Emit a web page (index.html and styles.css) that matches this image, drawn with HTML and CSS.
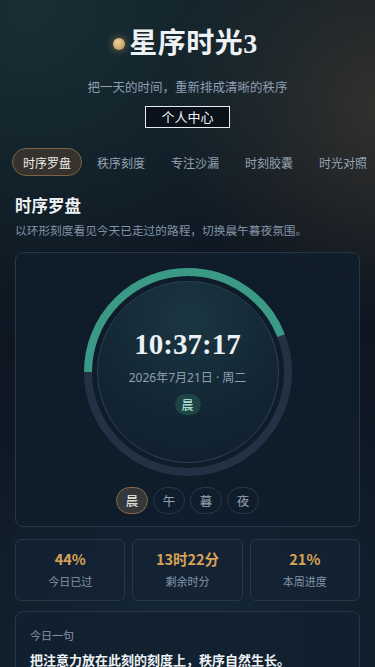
FILE: index.html
```html
<!DOCTYPE html>
<html lang="zh">
<head>
<meta charset="utf-8">
<meta name="viewport" content="width=device-width, initial-scale=1">
<title>星序时光3</title>
<link rel="stylesheet" href="styles.css">
</head>
<body>
<div class="page">
  <header class="hero">
    <h1 class="brand"><span class="brand-dot"></span>星序时光3</h1>
    <p class="tagline">把一天的时间，重新排成清晰的秩序</p>
    <button class="profile-btn">个人中心</button>
  </header>

  <nav class="tabs">
    <span class="tab active">时序罗盘</span>
    <span class="tab">秩序刻度</span>
    <span class="tab">专注沙漏</span>
    <span class="tab">时刻胶囊</span>
    <span class="tab">时光对照</span>
  </nav>

  <section class="section">
    <h2 class="section-title">时序罗盘</h2>
    <p class="section-desc">以环形刻度看见今天已走过的路程，切换晨午暮夜氛围。</p>

    <div class="dial-card">
      <div class="dial">
        <svg class="ring" viewBox="0 0 210 210" width="210" height="210">
          <circle cx="105" cy="105" r="100" fill="none" stroke="#223244" stroke-width="8"/>
          <circle cx="105" cy="105" r="100" fill="none" stroke="#3a9a86" stroke-width="8"
            stroke-dasharray="276.5 628.3" transform="rotate(180 105 105)"/>
        </svg>
        <div class="face">
          <div class="time">10:37:17</div>
          <div class="date">2026年7月21日 · 周二</div>
          <span class="period-badge">晨</span>
        </div>
      </div>
      <div class="periods">
        <span class="period active">晨</span>
        <span class="period">午</span>
        <span class="period">暮</span>
        <span class="period">夜</span>
      </div>
    </div>

    <div class="stats">
      <div class="stat"><div class="stat-value">44%</div><div class="stat-label">今日已过</div></div>
      <div class="stat"><div class="stat-value">13时22分</div><div class="stat-label">剩余时分</div></div>
      <div class="stat"><div class="stat-value">21%</div><div class="stat-label">本周进度</div></div>
    </div>

    <div class="quote-card">
      <div class="quote-label">今日一句</div>
      <div class="quote-text">把注意力放在此刻的刻度上，秩序自然生长。</div>
    </div>
  </section>
</div>
</body>
</html>
```

FILE: styles.css
```css
* { box-sizing: border-box; }
html, body {
  margin: 0;
  height: 100%;
}
body {
  background-color: #0d1520;
  background-image:
    radial-gradient(circle at 8% 2%, rgba(30, 62, 66, 0.55) 0, rgba(30, 62, 66, 0) 45%),
    radial-gradient(circle at 102% 16%, rgba(70, 62, 52, 0.65) 0, rgba(70, 62, 52, 0) 32%),
    radial-gradient(circle at 50% 95%, rgba(24, 48, 66, 0.6) 0, rgba(24, 48, 66, 0) 45%),
    linear-gradient(180deg, #101b24 0%, #0d1520 40%, #0f1a26 100%);
  font-family: "Noto Sans CJK SC", "Noto Sans", sans-serif;
  color: #e6ecf1;
  overflow: hidden;
}
.page {
  padding: 26px 15px 0;
}
.hero {
  display: flex;
  flex-direction: column;
  align-items: center;
}
.brand {
  margin: 0 0 0 -4px;
  display: flex;
  align-items: center;
  gap: 4px;
  font-family: "Liberation Serif", "Noto Sans CJK SC", serif;
  font-size: 28px;
  line-height: 36px;
  font-weight: 700;
  color: #eef2f5;
  letter-spacing: 0.5px;
}
.brand-dot {
  width: 12px;
  height: 12px;
  border-radius: 50%;
  background: radial-gradient(circle at 40% 35%, #f0d29a, #c9a165 70%);
  box-shadow: 0 0 8px rgba(220, 180, 110, 0.55);
}
.tagline {
  margin: 16px 0 0;
  font-size: 12.5px;
  line-height: 18px;
  color: #8e9fb2;
}
.profile-btn {
  margin-top: 10px;
  width: 85px;
  height: 22px;
  padding: 0;
  border: 1.5px solid #e8ecef;
  background: #0b111a;
  color: #f2f4f6;
  font-family: "Noto Sans CJK SC", sans-serif;
  font-size: 13px;
  line-height: 18px;
}
.tabs {
  margin: 20px -15px 0 -3px;
  display: flex;
  gap: 4px;
  white-space: nowrap;
  overflow: hidden;
}
.tab {
  flex: none;
  width: 70px;
  height: 28px;
  display: flex;
  align-items: center;
  justify-content: center;
  border-radius: 14px;
  border: 1px solid transparent;
  font-size: 12px;
  color: #94a3b4;
}
.tab.active {
  background: #36332f;
  border-color: #7a6342;
  color: #f1ede6;
}
.section-title {
  margin: 17px 0 0;
  font-size: 16.5px;
  line-height: 24px;
  font-weight: 700;
  color: #eef2f5;
}
.section-desc {
  margin: 4px 0 0;
  font-size: 11.7px;
  line-height: 18px;
  color: #8393a6;
}
.dial-card {
  margin-top: 13px;
  height: 275px;
  border: 1px solid #26374a;
  border-radius: 8px;
  background: rgba(15, 29, 44, 0.85);
  display: flex;
  flex-direction: column;
  align-items: center;
  padding-top: 14px;
}
.dial {
  display: grid;
  place-items: center;
  width: 210px;
  height: 210px;
}
.dial > * {
  grid-area: 1 / 1;
}
.ring {
  display: block;
}
.face {
  width: 182px;
  height: 182px;
  border-radius: 50%;
  border: 1px solid #2a4152;
  background: radial-gradient(circle at 50% 20%, #1b3642 0%, #132634 55%, #0f1d2b 100%);
  display: flex;
  flex-direction: column;
  align-items: center;
}
.time {
  margin-top: 46px;
  font-family: "Liberation Serif", serif;
  font-weight: 700;
  font-size: 29px;
  line-height: 32px;
  color: #eaf0f3;
}
.date {
  margin-top: 10px;
  font-family: "Noto Sans", "Noto Sans CJK SC", sans-serif;
  font-size: 12px;
  line-height: 16px;
  color: #8e9fb2;
}
.period-badge {
  margin-top: 8px;
  width: 26px;
  height: 21px;
  border-radius: 11px;
  background: #1d4546;
  color: #bfe9dc;
  font-size: 12px;
  display: flex;
  align-items: center;
  justify-content: center;
}
.periods {
  margin-top: 10px;
  display: flex;
  gap: 5px;
}
.period {
  width: 32px;
  height: 27px;
  border-radius: 14px;
  border: 1px solid #27384a;
  display: flex;
  align-items: center;
  justify-content: center;
  font-size: 12.5px;
  color: #93a3b4;
}
.period.active {
  background: #35383a;
  border-color: #8a6b45;
  color: #f3f1ec;
}
.stats {
  margin-top: 12px;
  display: grid;
  grid-template-columns: repeat(3, 1fr);
  gap: 7px;
}
.stat {
  height: 62px;
  border: 1px solid #26374a;
  border-radius: 6px;
  background: rgba(20, 36, 52, 0.7);
  display: flex;
  flex-direction: column;
  align-items: center;
  padding-top: 9px;
}
.stat-value {
  font-size: 14.5px;
  line-height: 20px;
  font-weight: 700;
  color: #d9a257;
}
.stat-label {
  margin-top: 4px;
  font-size: 11px;
  line-height: 16px;
  color: #8595a8;
}
.quote-card {
  margin-top: 10px;
  border: 1px solid #26374a;
  border-radius: 8px;
  background: rgba(18, 33, 48, 0.8);
  padding: 15px 14px 14px;
  height: 90px;
}
.quote-label {
  font-size: 11px;
  line-height: 16px;
  color: #8595a8;
}
.quote-text {
  margin-top: 7px;
  font-size: 13px;
  line-height: 20px;
  font-weight: 700;
  color: #eef2f5;
}
```
